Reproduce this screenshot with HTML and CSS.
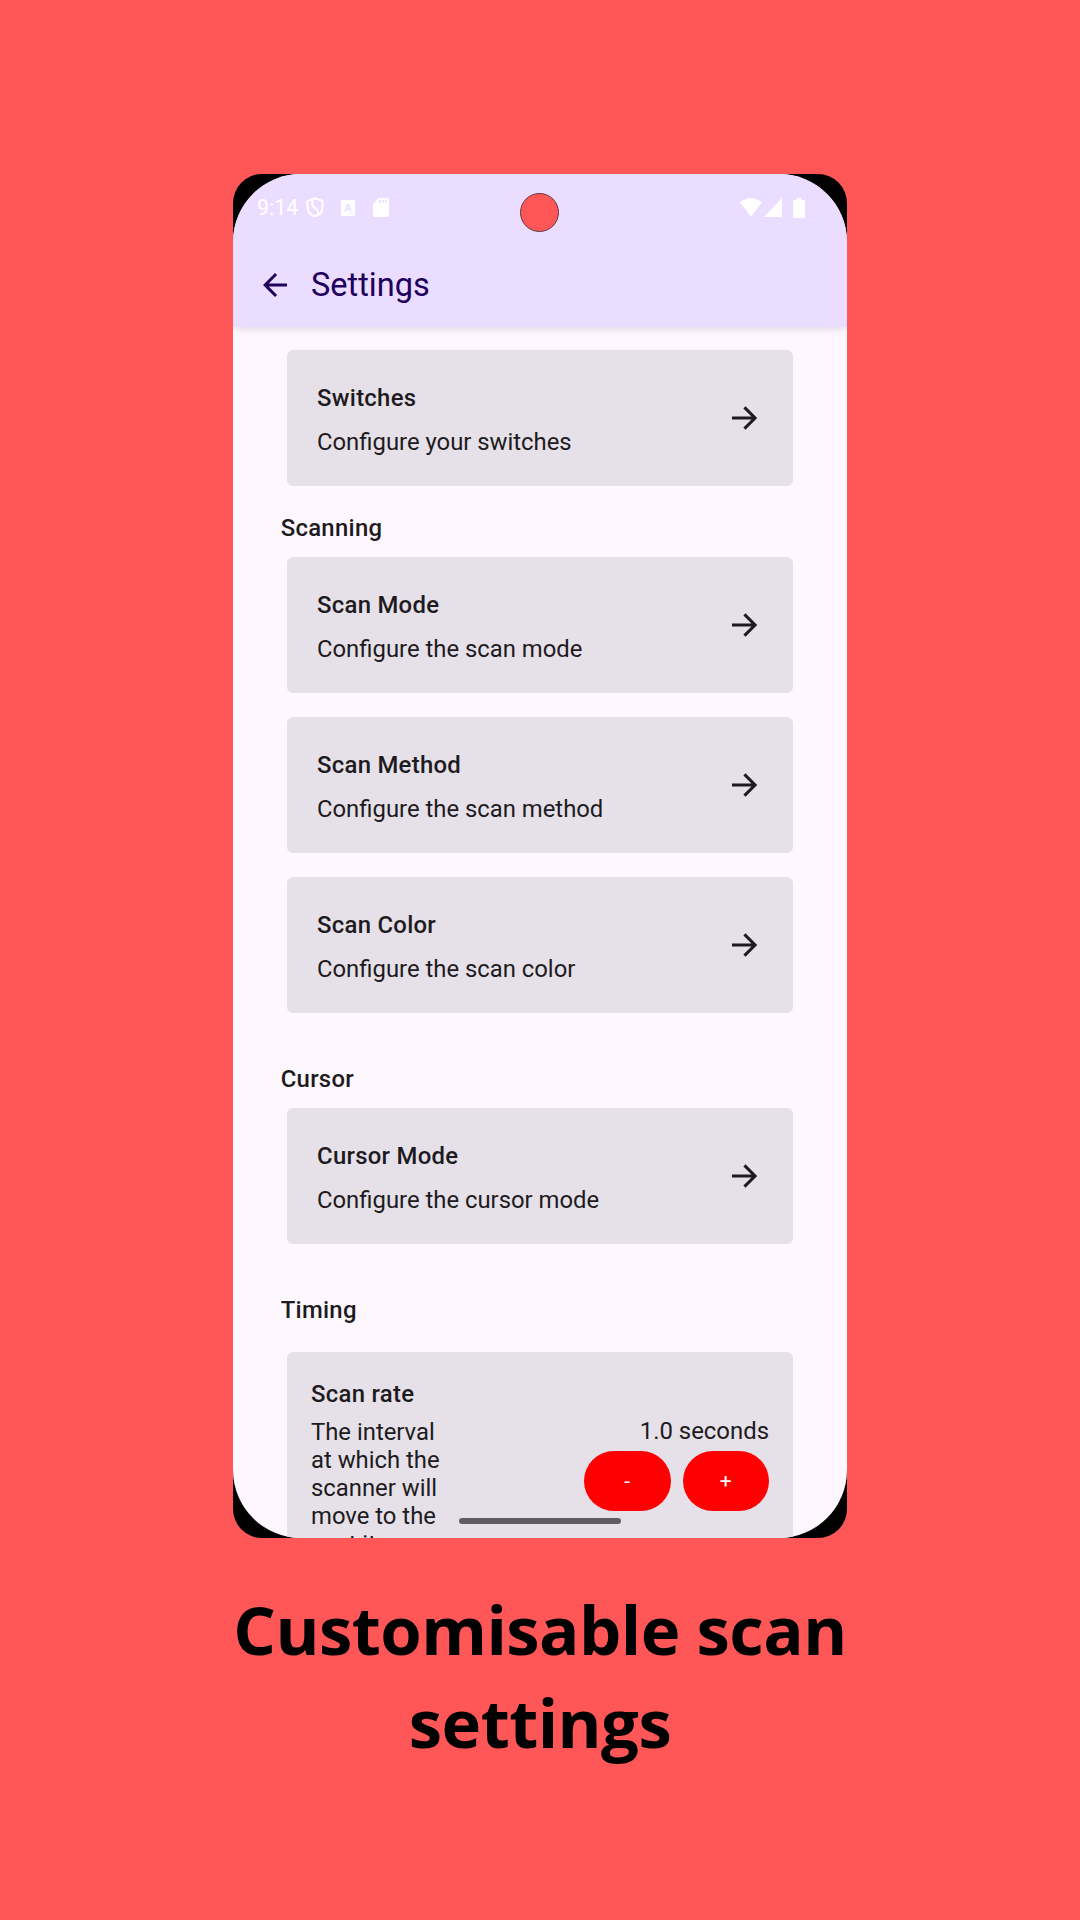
FILE: index.html
```html
<!DOCTYPE html>
<html lang="en">
<head>
<meta charset="utf-8">
<title>Settings</title>
<link rel="stylesheet" href="styles.css">
</head>
<body>
<svg class="defs" aria-hidden="true"><symbol id="forward" viewBox="0 0 24 24"><path d="M4 12h15M12.3 4.9l7.1 7.1-7.1 7.1" fill="none" stroke="currentColor" stroke-width="2"/></symbol></svg>
<main class="poster">
  <div class="phone">
    <div class="screen">
      <header class="top">
        <div class="status">
          <span class="time">9:14</span>
          <svg class="shield" viewBox="0 0 18 21"><path d="M9 1.2 16.5 4v6.2c0 4.2-3.1 7.7-7.5 9-4.4-1.300-7.500-4.800-7.500-9V4z" fill="none" stroke="#fff" stroke-width="2"/><path d="M6.300 3v4.500c0 3.500 5.800 4 5.800 7.500v2.500" fill="none" stroke="#fff" stroke-width="2"/></svg>
          <svg class="keyboard" viewBox="0 0 14 16"><path fill="#fff" fill-rule="evenodd" d="M1.200 0h11.600Q14 0 14 1.200v13.600q0 1.200-1.200 1.200H1.200Q0 16 0 14.800V1.200Q0 0 1.200 0zM6 4 3.200 11.500h1.700l.5-1.500h3l.5 1.500h1.700L7.900 4zM5.900 8.600l1-2.900 1 2.900zM7 13v1h1.200v-1zm2.200 0v1h1.200v-1zm2.200 0v1h1.200v-1z"/></svg>
          <svg class="card-icon" viewBox="0 0 16 19"><path fill="#fff" fill-rule="evenodd" d="M5.700 0H14q2 0 2 2v15q0 2-2 2H2q-2 0-2-2V5.700zM6 2v3h1.700V2zm3 0v3h1.700V2zm3 0v3h1.700V2z"/></svg>
          <svg class="wifi" viewBox="0 0 22 19"><path fill="#fff" d="M0 4.600Q11-4.400 22 4.600L11 18.500z"/></svg>
          <svg class="signal" viewBox="0 0 18 19"><path fill="#fff" d="M18 0v19H0z"/></svg>
          <svg class="battery" viewBox="0 0 12 20"><path fill="#fff" d="M3.500 0h5v2H11q1 0 1 1v16q0 1-1 1H1q-1 0-1-1V3q0-1 1-1h2.500z"/></svg>
        </div>
        <div class="appbar">
          <svg class="back" viewBox="0 0 24 24"><path fill="#21005d" d="M20 11H7.830l5.590-5.590L12 4l-8 8 8 8 1.410-1.410L7.830 13H20z"/></svg>
          <h1 class="title">Settings</h1>
        </div>
      </header>
      <section class="list">
        <div class="card"><div><h3 class="name">Switches</h3><p class="desc">Configure your switches</p></div><svg class="arrow"><use href="#forward"/></svg></div>
        <h2 class="heading">Scanning</h2>
        <div class="card"><div><h3 class="name">Scan Mode</h3><p class="desc">Configure the scan mode</p></div><svg class="arrow"><use href="#forward"/></svg></div>
        <div class="card"><div><h3 class="name">Scan Method</h3><p class="desc">Configure the scan method</p></div><svg class="arrow"><use href="#forward"/></svg></div>
        <div class="card"><div><h3 class="name">Scan Color</h3><p class="desc">Configure the scan color</p></div><svg class="arrow"><use href="#forward"/></svg></div>
        <h2 class="heading spaced">Cursor</h2>
        <div class="card"><div><h3 class="name">Cursor Mode</h3><p class="desc">Configure the cursor mode</p></div><svg class="arrow"><use href="#forward"/></svg></div>
        <h2 class="heading spaced timing">Timing</h2>
        <div class="rate">
          <div class="about"><h3 class="name">Scan rate</h3><p class="desc">The interval at which the scanner will move to the next item</p></div>
          <div class="control"><span class="value">1.0 seconds</span><div class="buttons"><button class="step">-</button><button class="step">+</button></div></div>
        </div>
      </section>
      <i class="camera"></i>
      <i class="home"></i>
    </div>
  </div>
  <p class="caption">Customisable scan<br>settings</p>
</main>
</body>
</html>
```
FILE: styles.css
```css
* { box-sizing: border-box; margin: 0; padding: 0; }
body { background: #ff5757; font-family: Roboto, sans-serif; color: #1d1b20; }
.defs { display: none; }
svg { display: block; flex: none; }
.poster { height: 1920px; padding-top: 174px; overflow: hidden; display: flex; flex-direction: column; align-items: center; }
.phone { width: 614px; height: 1364px; flex: none; background: #000; border-radius: 29px; overflow: hidden; }
.screen { position: relative; height: 100%; background: #fef7ff; border-radius: 68px; overflow: hidden; }
.top { height: 153px; background: #eaddff; box-shadow: 0 1px 8px rgba(0,0,0,.15); }
.status { height: 67px; padding: 0 42.500px 0 24px; display: flex; align-items: center; color: #fff; }
.time { font-size: 21.500px; width: 49px; }
.shield { width: 18px; height: 21px; margin-right: 17px; }
.keyboard { width: 14px; height: 16px; margin-right: 18px; }
.card-icon { width: 16px; height: 19px; }
.wifi { width: 22px; height: 19px; margin-left: auto; }
.signal { width: 18px; height: 19px; margin: 0 11px 0 2px; }
.battery { width: 12px; height: 20px; }
.appbar { height: 87px; padding: 0 24px; display: flex; align-items: center; gap: 18px; }
.back { width: 36px; height: 36px; }
.title { font-size: 32.500px; font-weight: 400; color: #21005d; line-height: 42px; }
.list { padding: 23px 54px 0; display: flex; flex-direction: column; }
.card { height: 135.500px; margin-bottom: 24.500px; padding: 30px 31px 0 30px; background: #e6e0e9; border-radius: 6px; display: flex; justify-content: space-between; }
.name { font-size: 23.900px; font-weight: 500; line-height: 36px; letter-spacing: .28px; }
.desc { font-size: 23.850px; line-height: 28px; }
.card .desc { margin-top: 12px; }
.arrow { width: 36px; height: 36px; margin-top: 20px; }
.heading { margin: -.5px 0 11.800px -6.300px; font-size: 23.900px; font-weight: 500; line-height: 36px; letter-spacing: .28px; }
.spaced { margin: 24px 0 11.200px -6.300px; }
.timing { margin-bottom: 23.900px; }
.rate { height: 260px; padding: 24px; background: #e6e0e9; border-radius: 6px; display: flex; justify-content: space-between; }
.about { width: 135px; }
.about .desc { margin-top: 5.500px; }
.control { padding-top: 41px; display: flex; flex-direction: column; align-items: flex-end; }
.value { font-size: 23.900px; line-height: 28px; }
.buttons { display: flex; gap: 12px; margin-top: 6px; }
.step { width: 86.500px; height: 60px; border: 0; border-radius: 30px; background: #f00; color: #fff; font: 400 20.900px Roboto, sans-serif; }
.camera { position: absolute; left: 287px; top: 19px; width: 39px; height: 39px; border-radius: 50%; background: #ff5757; border: 1px solid #5d3a45; }
.home { position: absolute; left: 226px; top: 1344px; width: 162px; height: 6px; border-radius: 3px; background: #605d62; }
.caption { margin-top: 44.500px; text-align: center; font: 700 67px/93.300px "Open Sans", sans-serif; letter-spacing: -.55px; color: #000; white-space: nowrap; }
```
